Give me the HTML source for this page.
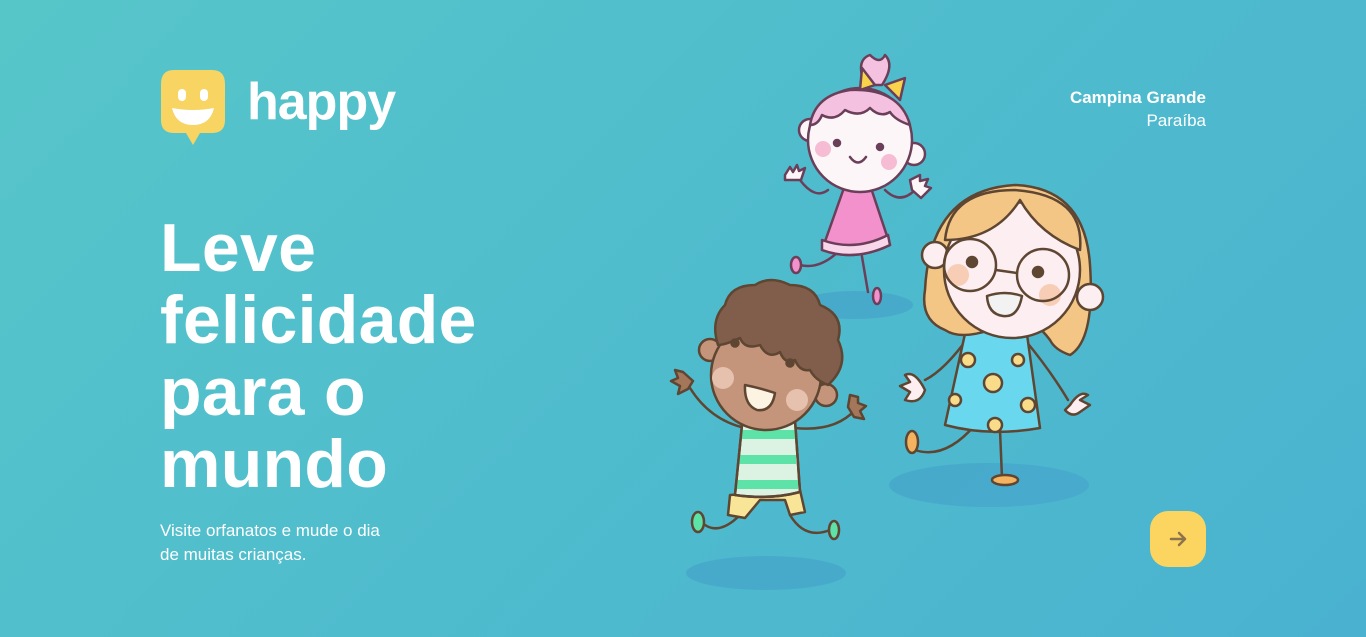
<!DOCTYPE html>
<html><head><meta charset="utf-8"><style>
*{margin:0;padding:0;box-sizing:border-box}
body{width:1366px;height:637px;overflow:hidden;background:linear-gradient(135deg,#57c6c9 0%,#4fbccd 50%,#4ab2d0 100%);font-family:"Liberation Sans",sans-serif;color:#fff;position:relative}
h1{position:absolute;left:160px;top:212px;font-size:68px;line-height:72px;font-weight:bold;letter-spacing:0.3px}
p.sub{position:absolute;left:160px;top:519px;font-size:17px;line-height:24px}
.loc{position:absolute;right:160px;top:86px;text-align:right;font-size:17px;line-height:23px}
.btn{position:absolute;left:1150px;top:511px;width:56px;height:56px;border-radius:18px;background:#fbd560}
.word{position:absolute;left:247px;top:72px;font-size:52px;font-weight:bold;letter-spacing:-1px}
</style></head><body>
<svg style="position:absolute;left:160px;top:70px" width="66" height="76" viewBox="0 0 66 76">
<path d="M14 0H52Q65 0 65 14V50Q65 63 52 63H40L33 75L26 63H14Q1 63 1 50V14Q1 0 14 0Z" fill="#f8d463"/>
<rect x="18" y="19" width="8" height="12" rx="4" fill="#fff"/><rect x="40" y="19" width="8" height="12" rx="4" fill="#fff"/>
<path d="M12 38Q33 42 54 38Q50 55 33 55Q16 55 12 38Z" fill="#fff"/>
</svg>
<div class="word">happy</div>
<h1>Leve<br>felicidade<br>para o<br>mundo</h1>
<p class="sub">Visite orfanatos e mude o dia<br>de muitas crianças.</p>
<div class="loc"><b>Campina Grande</b><br>Paraíba</div>
<div class="btn"><svg width="56" height="56"><path d="M21 28H35M29 22L35 28L29 34" stroke="#8d734b" stroke-width="2.5" fill="none" stroke-linecap="round" stroke-linejoin="round"/></svg></div>
<svg style="position:absolute;left:0;top:0" width="1366" height="637" fill="none" stroke="#5e4632" stroke-width="2.5" stroke-linecap="round" stroke-linejoin="round">
<g stroke="none" fill="#48a9cb" opacity=".9">
<ellipse cx="855" cy="305" rx="58" ry="14"/><ellipse cx="766" cy="573" rx="80" ry="17"/><ellipse cx="989" cy="485" rx="100" ry="22"/></g>
<!-- pink girl -->
<g stroke="#6b3f5a">
<path d="M828 190Q815 200 800 180M885 190Q900 205 915 190M860 245L868 292M840 250Q820 270 800 265" />
<path d="M845 185L822 250Q855 262 890 245L870 185Z" fill="#f291cc"/>
<path d="M822 240Q855 252 888 235L890 245Q855 262 822 250Z" fill="#f9d7ea"/>
<ellipse cx="796" cy="265" rx="5" ry="8" fill="#f291cc"/><ellipse cx="877" cy="296" rx="4" ry="8" fill="#f291cc"/>
<circle cx="810" cy="130" r="11" fill="#fdf6f8"/><circle cx="914" cy="154" r="11" fill="#fdf6f8"/>
<circle cx="860" cy="140" r="52" fill="#fdf6f8"/>
<path d="M810 125Q815 95 850 90Q900 88 910 125Q895 120 890 112Q880 118 870 108Q860 118 845 110Q835 122 822 115Q818 125 810 125Z" fill="#f4c2e0"/>
<path d="M865 85Q855 60 870 55Q880 65 885 55Q895 65 882 85Z" fill="#f4c2e0"/>
<path d="M875 85L862 68L860 90ZM885 85L905 78L900 100Z" fill="#f9d24c"/>
<circle cx="837" cy="143" r="3" fill="#6b3f5a"/><circle cx="880" cy="147" r="3" fill="#6b3f5a"/>
<path d="M850 157Q858 168 866 157"/>
<g stroke="none" fill="#f6bcd4"><circle cx="823" cy="149" r="8"/><circle cx="889" cy="162" r="8"/></g>
<path d="M785 175l5-8 3 5 4-7 2 6 6-3-4 12-16 0z" fill="#fdf6f8"/>
<path d="M910 180l10-5 0 6 8-2-3 7 6 2-10 10-9-8z" fill="#fdf6f8"/>
</g>
<!-- big girl -->
<g>
<path d="M970 335Q945 370 925 380M1025 340Q1050 370 1068 400M975 425Q945 460 915 450M1000 430L1002 478"/>
<ellipse cx="912" cy="442" rx="6" ry="11" fill="#f6b35f"/><ellipse cx="1005" cy="480" rx="13" ry="5" fill="#f6b35f"/>
<path d="M968 320L945 425Q990 437 1040 428L1025 320Z" fill="#69d8ef"/>
<g fill="#f8dc8a"><circle cx="993" cy="383" r="9"/><circle cx="968" cy="360" r="7"/><circle cx="1028" cy="405" r="7"/><circle cx="955" cy="400" r="6"/><circle cx="1018" cy="360" r="6"/><circle cx="995" cy="425" r="7"/></g>
<path d="M925 390Q915 370 905 375L910 382 900 386 910 392 905 400Q920 405 925 390Z" fill="#fdeef2"/>
<path d="M1070 405Q1080 390 1088 395L1080 400 1090 405 1080 412Q1072 418 1065 410Z" fill="#fdeef2"/>
<path d="M1015 185Q1085 188 1090 265Q1095 340 1070 355Q1055 350 1050 340Q1020 300 990 330Q960 340 945 330Q920 320 925 290Q930 190 1015 185Z" fill="#f3c685"/>
<circle cx="935" cy="255" r="13" fill="#fdeef2"/><circle cx="1090" cy="297" r="13" fill="#fdeef2"/>
<ellipse cx="1012" cy="270" rx="68" ry="68" fill="#fdeef2"/>
<path d="M945 240Q995 240 1020 200Q1040 235 1080 250Q1085 195 1015 190Q950 190 945 240Z" fill="#f3c685"/>
<g stroke="none" fill="#f8cdb5"><circle cx="958" cy="275" r="11"/><circle cx="1050" cy="295" r="11"/></g>
<circle cx="970" cy="265" r="26"/><circle cx="1043" cy="275" r="26"/><path d="M996 270L1017 273"/>
<circle cx="972" cy="262" r="5" fill="#5e4632"/><circle cx="1038" cy="272" r="5" fill="#5e4632"/>
<path d="M987 296Q1005 290 1022 296Q1018 318 1003 316Q988 314 987 296Z" fill="#f2f2f2"/>
</g>
<!-- boy -->
<g>
<path d="M745 428Q710 420 690 388M795 428Q835 432 855 410M740 515Q720 535 705 525M790 515Q805 540 830 530"/>
<ellipse cx="698" cy="522" rx="6" ry="10" fill="#5de2a8"/><ellipse cx="834" cy="530" rx="5" ry="9" fill="#5de2a8"/>
<path d="M730 495L728 515 745 518 760 500 785 500 790 515 805 512 800 490Z" fill="#f9e597"/>
<path d="M742 425L735 495Q770 500 800 492L795 420Z" fill="#dcf3e4"/>
<g stroke="none" fill="#5de2a8"><rect x="741" y="430" width="55" height="9"/><rect x="738" y="455" width="58" height="9"/><rect x="736" y="480" width="62" height="9"/></g>
<path d="M742 425L735 495Q770 500 800 492L795 420Z"/>
<path d="M683 372l-8-2 3 8-7 3 9 5 -2 8 10-5 5-8z" fill="#a5775a"/>
<path d="M850 395l8 2 0 6 8 3-6 5 4 8-10-2-6-10z" fill="#a5775a"/>
<circle cx="710" cy="350" r="11" fill="#c4957a"/><circle cx="826" cy="395" r="11" fill="#c4957a"/>
<circle cx="766" cy="375" r="55" fill="#c4957a"/>
<path d="M718 345Q710 320 725 305Q730 285 755 285Q770 275 790 285Q815 285 820 305Q845 315 838 340Q850 365 828 385Q815 380 810 370Q800 372 795 360Q785 365 780 352Q768 360 760 345Q745 350 740 338Q725 345 718 345Z" fill="#815d4b"/>
<g stroke="none" fill="#e6c1ae"><circle cx="723" cy="378" r="11"/><circle cx="797" cy="400" r="11"/></g>
<circle cx="735" cy="343" r="3.5" fill="#5e4632"/><circle cx="790" cy="363" r="3.5" fill="#5e4632"/>
<path d="M745 385Q760 388 775 393Q772 412 757 410Q744 405 745 385Z" fill="#fdf3e3"/>
</g>
</svg>
</body></html>
